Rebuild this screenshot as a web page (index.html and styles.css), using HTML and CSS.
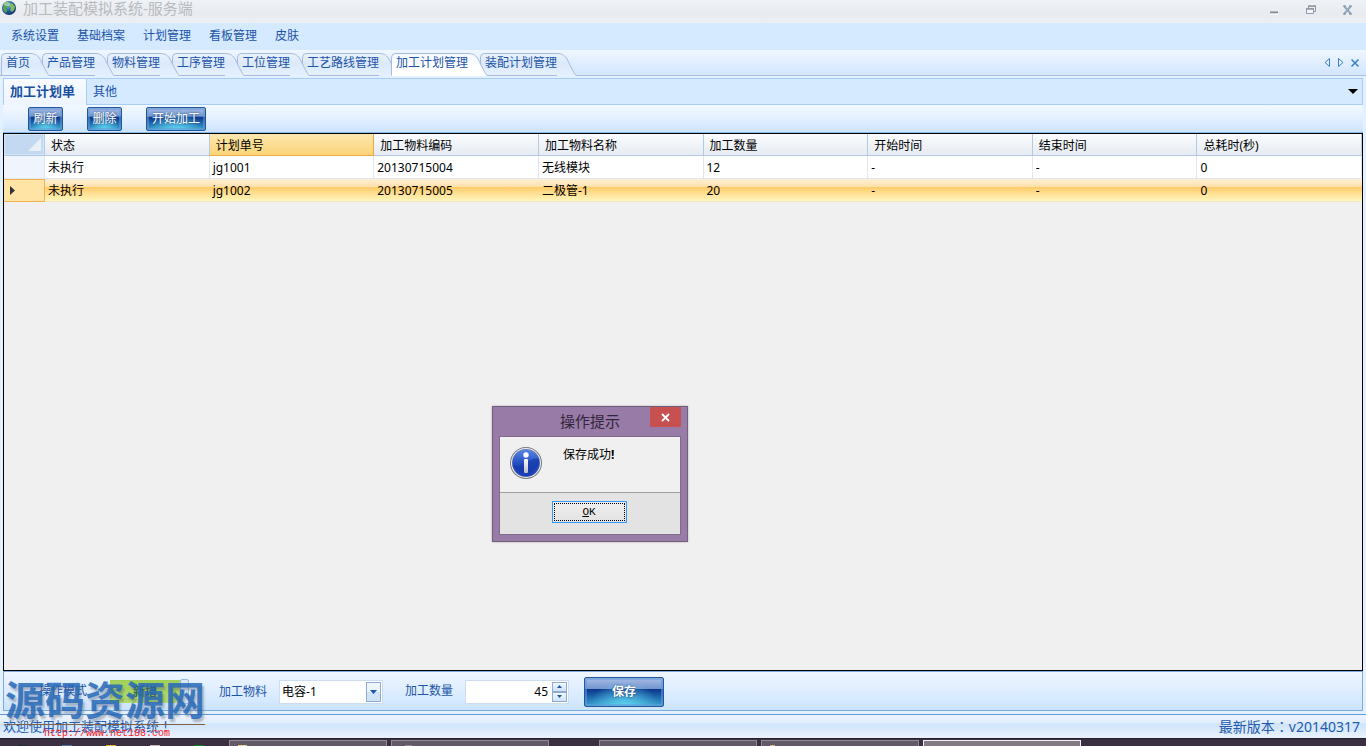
FILE: index.html
```html
<!DOCTYPE html>
<html lang="zh-CN">
<head>
<meta charset="utf-8">
<title>加工装配模拟系统-服务端</title>
<link rel="stylesheet" href="styles.css">
</head>
<body>
<svg class="defs" aria-hidden="true">
  <defs>
    <linearGradient id="tabFill" x1="0" y1="0" x2="0" y2="1"><stop offset="0" stop-color="#e9f2fd"/><stop offset=".45" stop-color="#dbe9fa"/><stop offset="1" stop-color="#e6f1fe"/></linearGradient>
    <linearGradient id="tabActive" x1="0" y1="0" x2="0" y2="1"><stop offset="0" stop-color="#f3f8ff"/><stop offset=".6" stop-color="#ffffff"/></linearGradient>
    <radialGradient id="sea" cx=".4" cy=".3" r=".75"><stop offset="0" stop-color="#7fb4e6"/><stop offset=".5" stop-color="#2a62ac"/><stop offset="1" stop-color="#12305e"/></radialGradient>
    <linearGradient id="infoBlue" x1="0" y1="0" x2="0" y2="1"><stop offset="0" stop-color="#5a86e4"/><stop offset=".5" stop-color="#2450c4"/><stop offset="1" stop-color="#1c3cb4"/></linearGradient>
    <linearGradient id="silver" x1="0" y1="0" x2="0" y2="1"><stop offset="0" stop-color="#ffffff"/><stop offset="1" stop-color="#b8bcc6"/></linearGradient>
    <symbol id="slope" viewBox="0 0 19 23">
      <path d="M0 .5C6 .5 8 3 10 6L15 16Q17.500 21 19 22.500V23H0Z"/>
      <path class="slope-line" d="M0 .5C6 .5 8 3 10 6L15 16Q17.500 21 19 22.500"/>
    </symbol>
  </defs>
</svg>
<div class="app">
  <header class="titlebar">
    <svg class="globe" viewBox="0 0 16 16"><circle cx="8" cy="8" r="7" fill="url(#sea)"/><path d="M3 3Q6 1 9 2L8 4 6 5 7 7 5 8 6 11 5 13Q2 11 2 8Z" fill="#56a548"/><path d="M10 3L12 4 14 7 13 10 11 12 9 10 10 8 8 6Z" fill="#7bc05a"/><ellipse cx="6" cy="4" rx="3" ry="2" fill="#fff" opacity=".4"/></svg>
    <h1 class="title">加工装配模拟系统-服务端</h1>
    <div class="winbtns">
      <button class="winbtn" aria-label="最小化"><svg viewBox="0 0 12 12"><path d="M2 8.500h8" stroke="#85888d" stroke-width="2"/><path d="M2 10h8" stroke="#fff"/></svg></button>
      <button class="winbtn" aria-label="还原"><svg viewBox="0 0 12 12" fill="none" stroke="#929aa6"><path d="M3.500 4V2.500h7v5H9"/><path d="M1.500 4.500h7v5h-7z" fill="#f3f6fa"/><path d="M3 2h8M1 5h8" stroke-width="1.500"/></svg></button>
      <button class="winbtn" aria-label="关闭"><svg viewBox="0 0 12 12"><path d="M2 2l7 8M9 2l-7 8" stroke="#96a7be" stroke-width="2"/><path d="M1 2h3M7 2h3M1 10h3M7 10h3" stroke="#858b93"/></svg></button>
    </div>
  </header>
  <nav class="menu">
    <button>系统设置</button><button>基础档案</button><button>计划管理</button><button>看板管理</button><button>皮肤</button>
  </nav>
  <div class="tabstrip">
    <div class="tabs" role="tablist">
      <button class="tab t1" role="tab"><span>首页</span><svg><use href="#slope"/></svg></button>
      <button class="tab t2" role="tab"><span>产品管理</span><svg><use href="#slope"/></svg></button>
      <button class="tab t3" role="tab"><span>物料管理</span><svg><use href="#slope"/></svg></button>
      <button class="tab t4" role="tab"><span>工序管理</span><svg><use href="#slope"/></svg></button>
      <button class="tab t5" role="tab"><span>工位管理</span><svg><use href="#slope"/></svg></button>
      <button class="tab t6" role="tab"><span>工艺路线管理</span><svg><use href="#slope"/></svg></button>
      <button class="tab active" role="tab" aria-selected="true"><span>加工计划管理</span><svg><use href="#slope"/></svg></button>
      <button class="tab t8" role="tab"><span>装配计划管理</span><svg><use href="#slope"/></svg></button>
    </div>
    <div class="tabnav">
      <button aria-label="上一个"><svg viewBox="0 0 10 10"><path d="M7.500 .5v8L3 4.500z" fill="#e4f0fd" stroke="#3a80cf"/></svg></button>
      <button aria-label="下一个"><svg viewBox="0 0 10 10"><path d="M2.500 .5v8L7 4.500z" fill="#e4f0fd" stroke="#3a80cf"/></svg></button>
      <button aria-label="关闭标签"><svg viewBox="0 0 10 10"><path d="M1.500 1.500l7 7M8.500 1.500l-7 7" stroke="#3a80cf" stroke-width="1.600"/></svg></button>
    </div>
  </div>
  <main class="page">
    <div class="subtabs" role="tablist">
      <button class="subtab on" role="tab" aria-selected="true">加工计划单</button>
      <button class="subtab" role="tab">其他</button>
      <button class="more" aria-label="更多"><svg viewBox="0 0 10 5"><path d="M0 0h10L5 5z"/></svg></button>
    </div>
    <div class="toolbar">
      <button class="glossy">刷新</button><button class="glossy">删除</button><button class="glossy wide">开始加工</button>
    </div>
    <section class="grid">
      <table>
        <colgroup><col class="rowhead"><col span="7"></colgroup>
        <thead>
          <tr><th class="corner"><svg viewBox="0 0 13 13"><path d="M13 0v13H0z" fill="#e9f0f8"/></svg></th><th>状态</th><th class="picked">计划单号</th><th>加工物料编码</th><th>加工物料名称</th><th>加工数量</th><th>开始时间</th><th>结束时间</th><th>总耗时(秒)</th></tr>
        </thead>
        <tbody>
          <tr><th></th><td>未执行</td><td>jg1001</td><td>20130715004</td><td>无线模块</td><td>12</td><td>-</td><td>-</td><td>0</td></tr>
          <tr class="current"><th><svg viewBox="0 0 5 9"><path d="M0 0l5 4.500L0 9z" fill="#333"/></svg></th><td>未执行</td><td>jg1002</td><td>20130715005</td><td>二极管-1</td><td>20</td><td>-</td><td>-</td><td>0</td></tr>
        </tbody>
      </table>
    </section>
    <form class="editor">
      <label class="mode-label" for="mode">操作模式</label>
      <button type="button" id="mode" class="switch" role="switch" aria-checked="true"><span>新增</span><i></i></button>
      <label class="mat-label" for="material">加工物料</label>
      <div class="field combo"><select id="material"><option>电容-1</option></select><span class="drop"><svg viewBox="0 0 7 4"><path d="M0 0h7L3.500 4z"/></svg></span></div>
      <label class="qty-label" for="qty">加工数量</label>
      <div class="field number"><input id="qty" type="text" inputmode="numeric" value="45"><span class="spin"><button type="button" aria-label="增加"><svg viewBox="0 0 5 3"><path d="M0 3h5L2.500 0z"/></svg></button><button type="button" aria-label="减少"><svg viewBox="0 0 5 3"><path d="M0 0h5L2.500 3z"/></svg></button></span></div>
      <button type="button" class="glossy save">保存</button>
    </form>
  </main>
  <footer class="status"><span class="welcome">欢迎使用加工装配模拟系统<span class="punct" lang="zh-TW">！</span></span><span class="version">最新版本<span class="punct" lang="zh-TW">：</span>v20140317</span></footer>
  <div class="taskbar">
    <div class="pins"><i class="p1"></i><i class="p2"></i><i class="p3"></i><i class="p4"></i><i class="p5"></i></div>
    <div class="task"><i class="folder"></i></div><div class="task"><i class="dots"></i></div>
    <div class="task apart"></div><div class="task"><i class="tan"></i></div><div class="task front"></div>
  </div>
</div>
<div class="dialog" role="dialog" aria-labelledby="dlgTitle">
  <div class="dlg-head"><h2 id="dlgTitle">操作提示</h2><button class="dlg-close" aria-label="关闭"><svg viewBox="0 0 9 9"><path d="M1 1l7 7M8 1L1 8" stroke="#fff" stroke-width="1.800"/></svg></button></div>
  <div class="dlg-client">
    <div class="dlg-body">
      <svg class="info" viewBox="0 0 34 34"><circle cx="17" cy="17" r="16" fill="#777b83"/><circle cx="17" cy="17" r="15" fill="#eef0f3"/><circle cx="17" cy="17" r="14" fill="#6d7ba4"/><circle cx="17" cy="17" r="13.500" fill="url(#infoBlue)"/><path d="M4 19Q10 21 18 16T30 13A13.500 13.500 0 0 1 4 19" fill="#1236a4" opacity=".6"/><circle cx="17" cy="9" r="2.700" fill="#fff"/><rect x="15" y="13" width="4" height="14" rx="1" fill="url(#silver)"/></svg>
      <p>保存成功<b>!</b></p>
    </div>
    <div class="dlg-foot"><button class="ok"><span><u>O</u>K</span></button></div>
  </div>
</div>
<div class="mark"><strong>源码资源网</strong><span>http://www.net188.com</span></div>
</body>
</html>
```
FILE: styles.css
```css
* { box-sizing: border-box; }
body { margin: 0; overflow: hidden; font: 12px/16px "Noto Sans", "Noto Sans CJK SC", sans-serif; color: #000; background: #d5e9ff; }
button { padding: 0; border: 0; background: none; font: inherit; color: inherit; }
svg { display: block; }
.defs { position: absolute; width: 0; height: 0; }
.app { display: flex; flex-direction: column; height: 100vh; }

.titlebar { display: flex; align-items: center; height: 23px; flex: none; padding: 0 12px 8px 1px; background: linear-gradient(#eff2f6, #e8ecf1 60%, #eceff4); }
.globe { width: 16px; height: 16px; }
.title { flex: 1; margin: 0 0 0 6px; font-size: 15px; line-height: 16px; font-weight: 400; color: #b9babd; }
.winbtns { display: flex; gap: 25px; padding-top: 5px; }
.winbtn svg { width: 12px; height: 12px; }

.menu { display: flex; gap: 18px; align-items: center; flex: none; height: 27px; padding: 0 11px 1px; background: #d5e9ff; color: #1c54a8; }

.tabstrip { position: relative; display: flex; justify-content: space-between; flex: none; height: 26px; padding: 3px 6px 0 1px; background: linear-gradient(#eff6ff, #d2e6fe); border-bottom: 1px solid #aebfe0; color: #1c54a8; }
.tabs { display: flex; }
.tab { position: relative; display: flex; height: 23px; margin-right: -7px; color: #1c54a8; }
.tab span { height: 23px; padding: 1px 0 0 4px; border: 1px solid #a9bbdb; border-right: 0; border-radius: 5px 0 0 0; background: linear-gradient(#e9f2fd, #dbe9fa 45%, #e6f1fe); }
.tab svg { width: 19px; height: 23px; fill: url(#tabFill); }
.slope-line { fill: none; stroke: #a9bbdb; }
.t1 { z-index: 7; } .t2 { z-index: 6; } .t3 { z-index: 5; } .t4 { z-index: 4; } .t5 { z-index: 3; } .t6 { z-index: 2; } .t8 { z-index: 1; }
.tab.active { z-index: 8; }
.tab.active span { border-bottom-color: #fff; background: linear-gradient(#f3f8ff, #fff 60%); }
.tab.active svg { fill: url(#tabActive); }
.tabnav { display: flex; gap: 4px; align-items: center; padding-bottom: 3px; }
.tabnav svg { width: 10px; height: 10px; }

.page { display: flex; flex-direction: column; flex: 1; min-height: 0; padding: 2px 3px 3px; background: #e2f0ff; }
.subtabs { display: flex; flex: none; height: 27px; border: 1px solid #a7cdf2; border-bottom: 0; background: linear-gradient(#d5e9ff 25px, #a7cdf2 25px); color: #1c54a8; }
.subtab { padding: 0 6px 1px; }
.subtab.on { padding: 0 11px 3px 6px; border-right: 1px solid #a7cdf2; font-size: 13px; font-weight: 700; background: linear-gradient(#f8fbff, #edf5ff); color: #17509f; }
.more { margin-left: auto; padding: 0 4px 2px 0; }
.more svg { width: 10px; height: 5px; }
.toolbar { display: flex; gap: 24px; flex: none; height: 28px; padding: 2px 25px; background: linear-gradient(#f2f8ff, #e4f0ff 50%, #cce4ff); border-bottom: 1px solid #8db9e8; }
.glossy { width: 35px; height: 24px; padding: 0 0 1px; border: 1px solid #24569f; border-radius: 2px; color: #fff; background: radial-gradient(ellipse at 50% 115%, #64dcf4, rgba(60, 190, 230, 0) 65%), linear-gradient(#a9bce5, #7396cf 38%, #0b3589 40%, #1c62ab 65%, #3aa3cd); box-shadow: inset 0 0 0 2px rgba(100, 155, 215, .55); text-shadow: 0 0 2px #18356d; }
.glossy.wide { width: 60px; }

.grid { flex: 1; min-height: 0; border: 1px solid #000; background: #f0f0f0; }
table { width: 100%; table-layout: fixed; border-collapse: separate; border-spacing: 0; }
.rowhead { width: 41px; }
th, td { height: 23px; padding: 2px 3px 0; text-align: left; font-weight: 400; background: #fff; border-right: 1px solid #e1e7f1; border-bottom: 1px solid #e1e7f1; white-space: nowrap; }
thead th { height: 22px; padding: 2px 6px 0; background: linear-gradient(#fafcfe, #e6ebf2); border-color: #b6cade; }
thead .picked { background: linear-gradient(#fde6af, #f9d478); border-color: #f0a840; }
thead .corner { padding: 0 3px; background: #c3d9f1; border-color: #b0cbe8; box-shadow: inset 0 0 0 1px #d4e5f7; }
.corner svg { width: 13px; height: 13px; margin-left: auto; }
tbody th { background: #f0f4fc; }
.current th { padding: 0 6px; background: #ffe4a6; border: 1px solid #f4b24e; border-left: 0; }
.current svg { width: 5px; height: 9px; }
.current td { border-right: 0; border-color: #f4e8c4; background: linear-gradient(#fdf0d4, #fde1ac 35%, #ffcb68 38%, #ffdc8c 60%, #fff6bc); }

.editor { display: flex; align-items: center; flex: none; height: 40px; padding-top: 1px; border: 1px solid #7cabdd; background: linear-gradient(#eff6ff, #cce4ff); color: #1c54a8; }
.mode-label { margin: 0 23px 2px 35px; }
.switch { position: relative; width: 78px; height: 23px; padding-right: 8px; background: linear-gradient(#a0cf5a, #b2dc6b); color: #276e55; font-weight: 700; }
.switch i { position: absolute; right: -1px; top: -1px; width: 9px; height: 25px; border: 1px solid #94b8de; border-radius: 2px; background: #d7e8fb; }
.mat-label { margin: 0 12px 0 31px; }
.qty-label { margin: 0 12px 2px 22px; }
.field { display: flex; width: 104px; height: 24px; padding: 1px; border: 1px solid #cdddef; background: #fff; }
.field select, .field input { flex: 1; min-width: 0; padding: 0 1px; border: 0; outline: 0; appearance: none; background: #fff; color: #000; font: inherit; }
.field input { padding-right: 4px; text-align: right; }
.drop { display: grid; place-items: center; width: 15px; border: 1px solid #8eacd2; background: linear-gradient(#edf5ff 50%, #cfe3fb 50%); }
.drop svg { width: 7px; height: 4px; }
.field svg { fill: #1b55a5; }
.spin { display: grid; grid-template-rows: 1fr 1fr; width: 15px; }
.spin button { display: grid; place-items: center; border: 1px solid #8eacd2; background: linear-gradient(#f0f7ff, #cfe3fb); }
.spin svg { width: 5px; height: 3px; }
.save { width: 80px; height: 30px; margin-left: 15px; padding: 0; font-weight: 700; }

.status { display: flex; justify-content: space-between; align-items: center; flex: none; height: 24px; padding: 0 6px 1px 3px; border-top: 1px solid #6298d3; background: linear-gradient(#edf4fe, #e0edfd 35%, #cfe4fb 40%, #eaf2fd); color: #1f5bae; }
.welcome { font-size: 13px; }
.version { font-size: 14px; }
.punct { font-family: "Noto Sans CJK TC", sans-serif; }

.taskbar { display: flex; gap: 4px; flex: none; height: 8px; padding-top: 1px; border-top: 1px solid #26202d; background: #3b3041; overflow: hidden; }
.pins { display: flex; align-items: flex-end; gap: 34px; width: 225px; padding-left: 18px; }
.pins i { width: 10px; height: 1px; }
.p1 { background: #292b30; } .p2 { background: #5a719b; } .p3 { background: #e4b329; } .p4 { background: #c6bac2; } .p5 { background: #118019; }
.task { display: flex; align-items: flex-end; flex: 0 0 158px; padding-left: 8px; border: 1px solid #918a95; border-bottom: 0; background: #635a67; }
.task.apart { margin-left: 46px; }
.task.front { border-color: #f0eff1; background: #827b84; }
.task i { height: 1px; }
.folder { width: 9px; background: #ead58d; }
.dots { width: 7px; margin-left: 5px; background: #8e8992; }
.tan { width: 5px; background: #c9b993; }

.dialog { position: absolute; left: calc(50% - 191px); top: 406px; width: 196px; padding: 0 6px 6px; border: 1px solid #725f80; background: #987ba7; box-shadow: 0 0 2px #b0a9b5; }
.dlg-head { display: flex; justify-content: flex-end; align-items: flex-start; height: 29px; }
.dlg-head h2 { flex: 1; margin: 0; padding-left: 31px; font-size: 15px; line-height: 29px; font-weight: 400; color: #33263a; text-align: center; }
.dlg-close { display: grid; place-items: center; width: 31px; height: 20px; background: #c75050; }
.dlg-close svg { width: 9px; height: 9px; }
.dlg-client { border: 1px solid #806b8d; background: #e3e3e3; }
.dlg-body { display: flex; height: 56px; padding: 9px 9px 0; border-bottom: 1px solid #a0a0a0; background: #f0f0f0; }
.info { width: 34px; height: 34px; }
.dlg-body p { margin: 1px 0 0 20px; }
.dlg-foot { display: flex; justify-content: center; padding: 8px 2px 11px 0; }
.ok { width: 75px; height: 22px; padding: 1px; border: 1px solid #3399ff; background: linear-gradient(#f0f0f0, #e2e2e2); font-family: "Liberation Mono", monospace; font-size: 11px; }
.ok span { display: block; border: 1px dotted #000; line-height: 16px; }

.mark { position: absolute; left: 5px; bottom: 5px; width: 200px; pointer-events: none; }
.mark strong { display: block; height: 47px; font: 700 40px/40px "Noto Sans CJK SC", sans-serif; color: rgba(38, 105, 184, .85); text-shadow: 2px 3px 2px rgba(90, 100, 120, .4); border-bottom: 1px solid #846046; white-space: nowrap; }
.mark span { display: block; padding: 2px 0 0 39px; font: 10px/14px "Liberation Mono", monospace; color: #f22; }
```
